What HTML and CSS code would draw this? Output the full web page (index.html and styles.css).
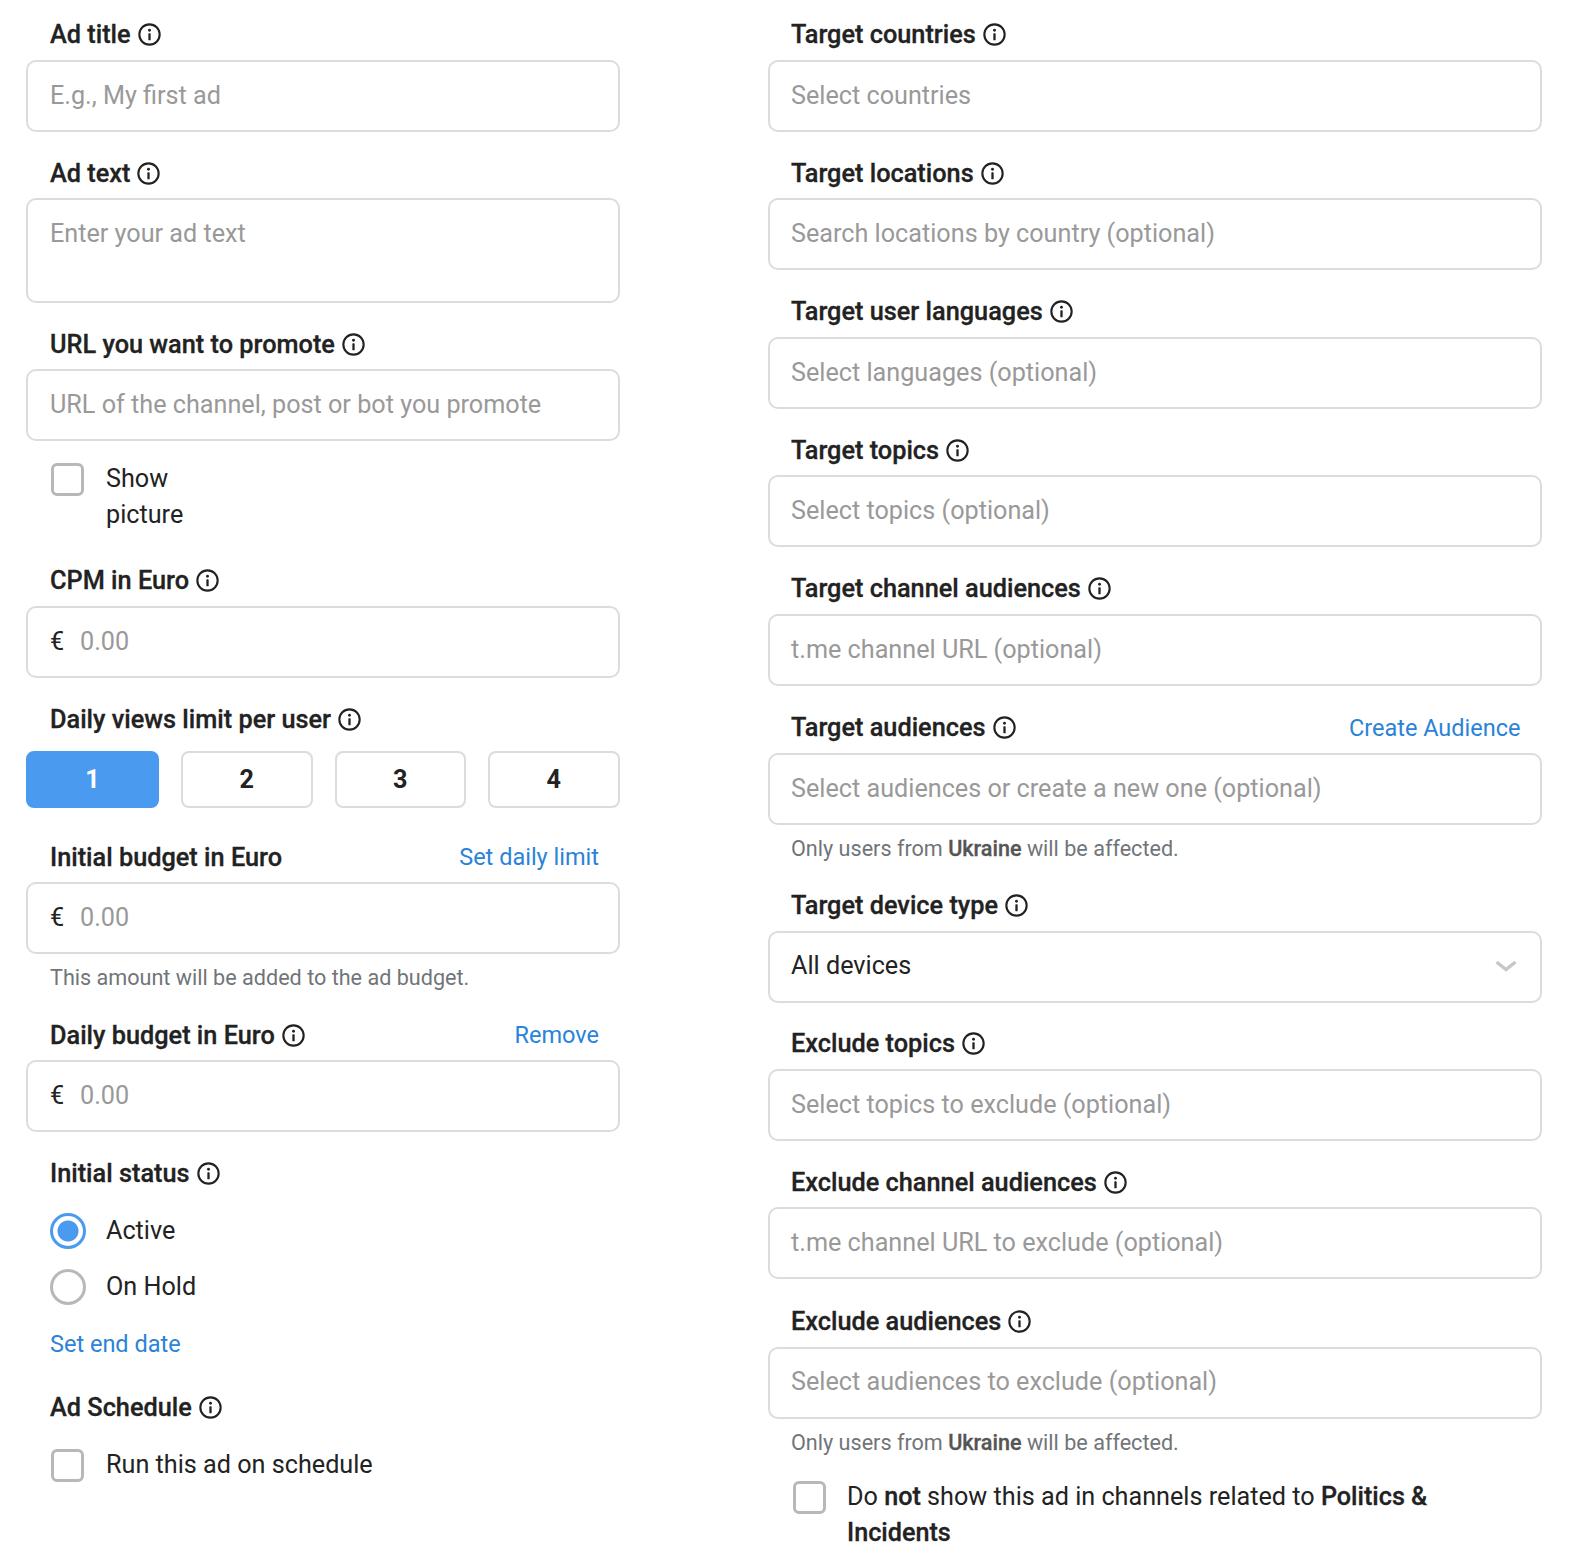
FILE: index.html
```html
<!DOCTYPE html>
<html lang="en">

<head>
    <meta charset="UTF-8">
    <title>Create ad</title>
    <link rel="stylesheet" href="styles.css">
</head>

<body>
    <svg class="icon-defs" width="0" height="0">
        <symbol id="info" viewBox="0 0 24 24">
            <circle cx="12" cy="12" r="10.6" fill="none" stroke="currentColor" stroke-width="2.2" />
            <circle cx="12" cy="7.6" r="1.5" fill="currentColor" />
            <rect x="10.8" y="10.8" width="2.4" height="7.2" rx="0.6" fill="currentColor" />
        </symbol>
    </svg>

    <div class="form">
        <!-- Left column -->
        <div class="col col-left">
            <div class="field">
                <div class="label"><span>Ad title</span><svg class="info"><use href="#info" /></svg></div>
                <div class="input placeholder">E.g., My first ad</div>
            </div>
            <div class="field">
                <div class="label"><span>Ad text</span><svg class="info"><use href="#info" /></svg></div>
                <div class="input textarea placeholder">Enter your ad text</div>
            </div>
            <div class="field field-tight">
                <div class="label"><span>URL you want to promote</span><svg class="info"><use href="#info" /></svg></div>
                <div class="input placeholder">URL of the channel, post or bot you promote</div>
            </div>
            <div class="check check-narrow">
                <span class="box"></span>
                <span class="check-text">Show picture</span>
            </div>
            <div class="field">
                <div class="label"><span>CPM in Euro</span><svg class="info"><use href="#info" /></svg></div>
                <div class="input"><span class="currency">€</span><span class="placeholder">0.00</span></div>
            </div>
            <div class="field">
                <div class="label"><span>Daily views limit per user</span><svg class="info"><use href="#info" /></svg></div>
                <div class="options">
                    <div class="option active">1</div>
                    <div class="option">2</div>
                    <div class="option">3</div>
                    <div class="option">4</div>
                </div>
            </div>
            <div class="field field-tight">
                <div class="label"><span>Initial budget in Euro</span><a class="link label-link">Set daily limit</a></div>
                <div class="input"><span class="currency">€</span><span class="placeholder">0.00</span></div>
                <p class="hint">This amount will be added to the ad budget.</p>
            </div>
            <div class="field">
                <div class="label"><span>Daily budget in Euro</span><svg class="info"><use href="#info" /></svg><a class="link label-link">Remove</a></div>
                <div class="input"><span class="currency">€</span><span class="placeholder">0.00</span></div>
            </div>
            <div class="field field-status">
                <div class="label"><span>Initial status</span><svg class="info"><use href="#info" /></svg></div>
                <div class="radio"><span class="dot on"></span><span>Active</span></div>
                <div class="radio"><span class="dot"></span><span>On Hold</span></div>
            </div>
            <a class="link end-date">Set end date</a>
            <div class="field">
                <div class="label"><span>Ad Schedule</span><svg class="info"><use href="#info" /></svg></div>
                <div class="check check-schedule">
                    <span class="box"></span>
                    <span class="check-text">Run this ad on schedule</span>
                </div>
            </div>
        </div>

        <!-- Right column -->
        <div class="col col-right">
            <div class="field">
                <div class="label"><span>Target countries</span><svg class="info"><use href="#info" /></svg></div>
                <div class="input placeholder">Select countries</div>
            </div>
            <div class="field">
                <div class="label"><span>Target locations</span><svg class="info"><use href="#info" /></svg></div>
                <div class="input placeholder">Search locations by country (optional)</div>
            </div>
            <div class="field">
                <div class="label"><span>Target user languages</span><svg class="info"><use href="#info" /></svg></div>
                <div class="input placeholder">Select languages (optional)</div>
            </div>
            <div class="field">
                <div class="label"><span>Target topics</span><svg class="info"><use href="#info" /></svg></div>
                <div class="input placeholder">Select topics (optional)</div>
            </div>
            <div class="field">
                <div class="label"><span>Target channel audiences</span><svg class="info"><use href="#info" /></svg></div>
                <div class="input placeholder">t.me channel URL (optional)</div>
            </div>
            <div class="field field-tight">
                <div class="label"><span>Target audiences</span><svg class="info"><use href="#info" /></svg><a class="link label-link">Create Audience</a></div>
                <div class="input placeholder">Select audiences or create a new one (optional)</div>
                <p class="hint">Only users from <b>Ukraine</b> will be affected.</p>
            </div>
            <div class="field">
                <div class="label"><span>Target device type</span><svg class="info"><use href="#info" /></svg></div>
                <div class="input select">
                    <span>All devices</span>
                    <svg class="chevron" viewBox="0 0 22 12"><path d="M1.5 2l9.5 7.5 9.5-7.5" fill="none" stroke="currentColor" stroke-width="3.5" /></svg>
                </div>
            </div>
            <div class="field">
                <div class="label"><span>Exclude topics</span><svg class="info"><use href="#info" /></svg></div>
                <div class="input placeholder">Select topics to exclude (optional)</div>
            </div>
            <div class="field">
                <div class="label"><span>Exclude channel audiences</span><svg class="info"><use href="#info" /></svg></div>
                <div class="input placeholder">t.me channel URL to exclude (optional)</div>
            </div>
            <div class="field field-tight">
                <div class="label"><span>Exclude audiences</span><svg class="info"><use href="#info" /></svg></div>
                <div class="input placeholder">Select audiences to exclude (optional)</div>
                <p class="hint">Only users from <b>Ukraine</b> will be affected.</p>
            </div>
            <div class="check check-politics">
                <span class="box"></span>
                <span class="check-text">Do <b>not</b> show this ad in channels related to <b>Politics &amp; Incidents</b></span>
            </div>
        </div>
    </div>
</body>

</html>
```

FILE: styles.css
```css
* {
    margin: 0;
    padding: 0;
    box-sizing: border-box;
}

body {
    font-family: 'Roboto', 'Liberation Sans', sans-serif;
    font-size: 25.2px;
    color: #222;
    background: #fff;
}

.icon-defs {
    position: absolute;
}

.form {
    display: grid;
    grid-template-columns: 594px 774px;
    column-gap: 147.5px;
    padding: 16px 28px 0 26px;
}

.field {
    margin-bottom: 22.49px;
}

.field-tight {
    margin-bottom: 0;
}

.label {
    display: flex;
    align-items: center;
    height: 36px;
    margin: 0 21px 8px 24px;
    padding-top: 1.5px;
    font-weight: 500;
    font-size: 25.3px;
    -webkit-text-stroke: 0.3px #222;
}

.info {
    width: 23px;
    height: 23px;
    margin-left: 7px;
    color: #222;
}

.link {
    color: #2a83d8;
    font-size: 23.5px;
}

.label-link {
    margin-left: auto;
    font-weight: 400;
    -webkit-text-stroke: 0;
}

.input {
    display: flex;
    align-items: center;
    height: 72px;
    padding: 0 22px 1.5px;
    border: 2px solid #dcdcdc;
    border-radius: 10px;
    background: #fff;
}

.textarea {
    align-items: flex-start;
    height: 104.5px;
    padding-top: 18.5px;
}

.placeholder {
    color: #999;
}

.currency {
    width: 30px;
    color: #222;
}

.select {
    justify-content: space-between;
    padding-right: 23px;
}

.chevron {
    width: 22px;
    height: 12px;
    color: #c8c8cc;
}

.hint {
    margin: 7px 24px 20.5px;
    height: 34px;
    line-height: 34px;
    font-size: 21.6px;
    color: #707579;
}

.hint b {
    font-weight: 500;
    color: #555;
    -webkit-text-stroke: 0.3px #555;
}

.col-left .hint {
    margin-bottom: 21px;
}

.col-right .label,
.col-right .hint {
    margin-left: 23.5px;
}

.col-right .input {
    padding-left: 21.5px;
}

.col-right .field-tight {
    padding-top: 0.6px;
}

.check {
    display: flex;
    gap: 22px;
    padding-left: 25px;
    line-height: 36px;
}

.check b {
    font-weight: 500;
    -webkit-text-stroke: 0.3px #222;
}

.box {
    flex: none;
    width: 33px;
    height: 33px;
    margin-top: 2px;
    border: 3px solid #b8b8b8;
    border-radius: 6px;
}

.check-narrow {
    margin-top: 20px;
    margin-bottom: 28.5px;
}

.check-narrow .check-text {
    width: 90px;
}

.check-politics {
    margin-top: -1.5px;
    gap: 21.5px;
    padding-right: 100px;
}

.options {
    display: grid;
    grid-template-columns: 133px repeat(3, 131.5px);
    column-gap: 22px;
    margin-top: 15px;
    margin-bottom: 30px;
}

.option {
    display: flex;
    align-items: center;
    justify-content: center;
    height: 57px;
    border: 2px solid #dcdcdc;
    border-radius: 8px;
    font-weight: 700;
}

.option.active {
    border-color: #4a9af0;
    background: #4a9af0;
    color: #fff;
}

.radio {
    display: flex;
    align-items: center;
    gap: 20px;
    height: 56px;
    padding-left: 24px;
}

.field-status {
    margin-bottom: 0;
}

.field-status .label {
    margin-bottom: 12px;
}

.dot {
    flex: none;
    width: 36px;
    height: 36px;
    border: 3px solid #b8b8b8;
    border-radius: 50%;
}

.dot.on {
    border-color: #4a9af0;
    background: radial-gradient(circle, #4a9af0 0 10px, #fff 11px);
}

.end-date {
    display: block;
    margin: 11px 24px 27px;
    line-height: 36px;
}

.check-schedule {
    margin-top: 22px;
}
```
